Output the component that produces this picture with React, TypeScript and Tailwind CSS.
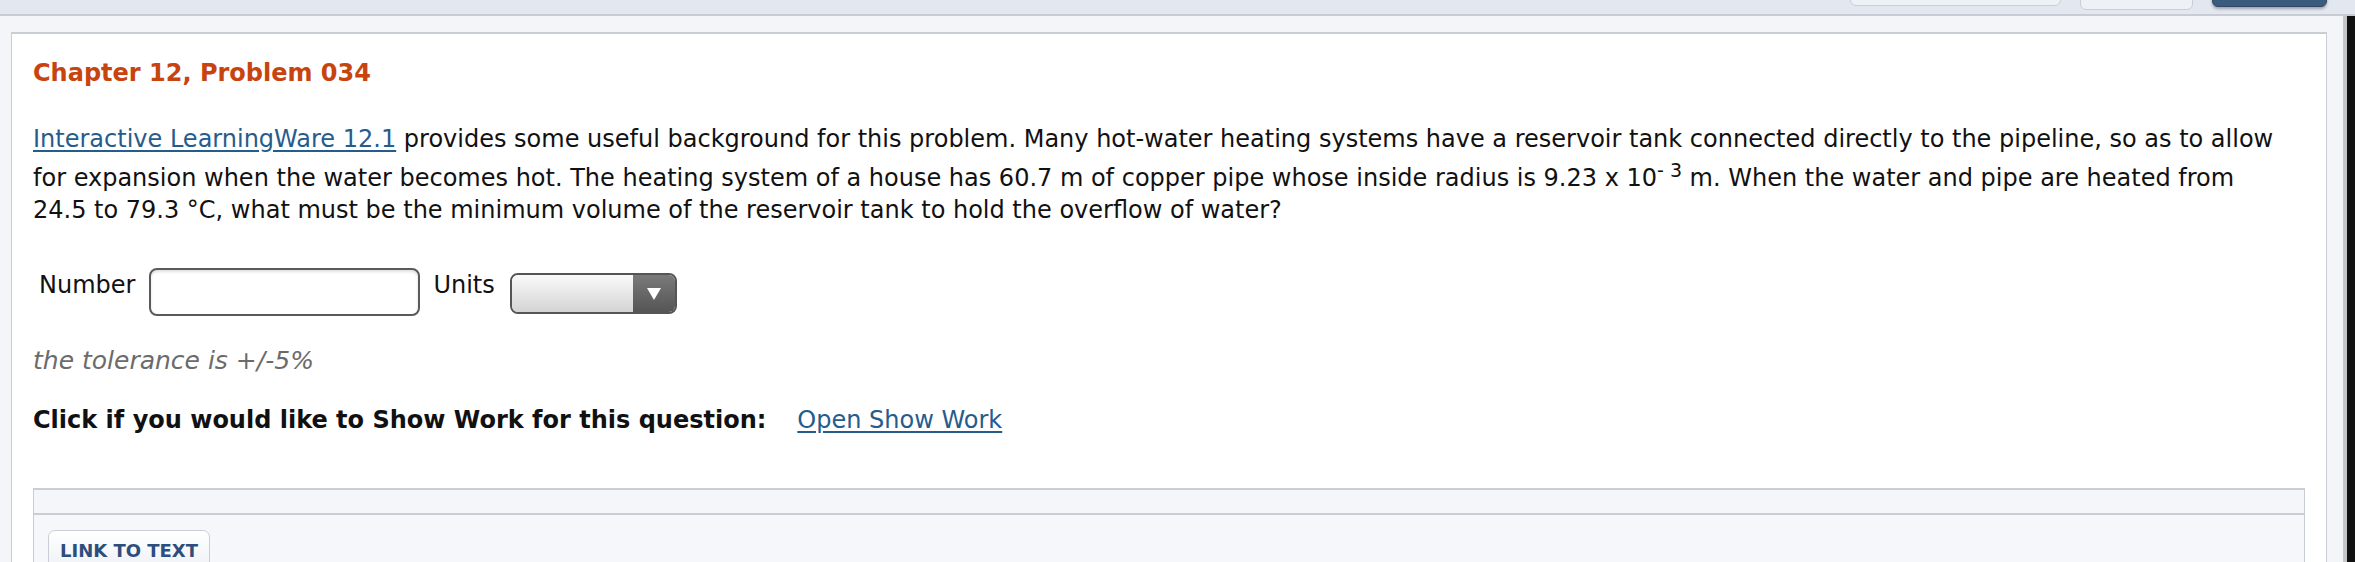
import type { ReactNode } from "react";

function TopButton({ className }: { className: string }) {
  return <div className={`h-[40px] rounded-[6px] border ${className}`} />;
}

function Label({ children }: { children: ReactNode }) {
  return <span className="mt-[2px] text-[24px] leading-[30px] text-[#111]">{children}</span>;
}

export default function App() {
  return (
    <div className="flex h-[562px] w-[2355px] flex-col overflow-hidden bg-[#f3f5f8] font-['DejaVu_Sans',sans-serif]">
      <div className="flex h-[16px] shrink-0 items-end justify-end gap-[19px] overflow-hidden border-b-2 border-[#c7ccd5] bg-[#e3e7ef] pr-[28px]">
        <div className="mb-[8px] w-[211px]">
          <TopButton className="border-[#c9ced6] bg-[#eef1f6]" />
        </div>
        <div className="mb-[4px] w-[113px]">
          <TopButton className="border-[#c9ced6] bg-[#eef1f6]" />
        </div>
        <div className="mb-[7px] w-[115px]">
          <TopButton className="border-[#2e4a6a] bg-[#3a5a7e] shadow-[0_2px_3px_rgba(0,0,0,0.3)]" />
        </div>
      </div>

      <div className="flex flex-1">
        <div className="ml-[11px] mt-[16px] flex w-[2316px] flex-col border border-t-2 border-[#c9ced6] bg-white pl-[21px] pr-[21px]">
          <h1 className="mt-[24px] text-[24px] font-bold leading-[30px] text-[#c7440f]">
            Chapter 12, Problem 034
          </h1>

          <p className="mt-[35px] text-[24px] leading-[32px] text-[#111]">
            <a href="#" className="text-[#265c8c] underline underline-offset-[3px]">
              Interactive LearningWare 12.1
            </a>{" "}
            provides some useful background for this problem. Many hot-water heating systems have a
            reservoir tank connected directly to the pipeline, so as to allow for expansion when the
            water becomes hot. The heating system of a house has 60.7 m of copper pipe whose inside
            radius is 9.23 x 10
            <sup className="static align-super text-[19px] leading-[30px]">- 3</sup> m. When the
            water and pipe are heated from
            <br />
            24.5 to 79.3 °C, what must be the minimum volume of the reservoir tank to hold the
            overflow of water?
          </p>

          <div className="mt-[42px] flex items-start">
            <span className="ml-[6px] flex">
              <Label>Number</Label>
            </span>
            <div className="ml-[14px] h-[48px] w-[271px] rounded-[8px] border-2 border-[#5a5a5a] bg-white shadow-[inset_0_2px_3px_rgba(0,0,0,0.12)]" />
            <span className="ml-[13px] flex">
              <Label>Units</Label>
            </span>
            <div className="ml-[15px] mt-[5px] flex h-[41px] w-[167px] overflow-hidden rounded-[8px] border-2 border-[#555]">
              <div className="flex-1 bg-gradient-to-b from-[#fafafa] to-[#d4d4d4]" />
              <div className="flex w-[42px] items-center justify-center bg-gradient-to-b from-[#7a7a7a] to-[#555]">
                <svg width="14" height="12" viewBox="0 0 14 12">
                  <path d="M0 0 L14 0 L7 12 Z" fill="#fff" />
                </svg>
              </div>
            </div>
          </div>

          <p className="mt-[29px] text-[25px] italic leading-[32px] text-[#6b6b6b]">
            the tolerance is +/-5%
          </p>

          <div className="mt-[27px] flex items-center gap-[31px] text-[24px] leading-[32px]">
            <span className="font-bold text-[#111]">
              Click if you would like to Show Work for this question:
            </span>
            <a href="#" className="text-[#265c8c] underline underline-offset-[3px]">
              Open Show Work
            </a>
          </div>

          <div className="mt-[52px] flex flex-1 flex-col border border-t-2 border-b-0 border-[#c9ced6] bg-[#f5f7fa]">
            <div className="h-[25px] border-b-2 border-[#c9ced6] bg-[#f4f6f9]" />
            <div className="px-[14px] pt-[15px]">
              <div className="inline-flex h-[40px] items-start rounded-t-[7px] border border-[#c9ced6] bg-gradient-to-b from-[#ffffff] to-[#eef1f6] px-[11px] pt-[8px] text-[18px] font-bold leading-[24px] text-[#2c4d7d]">
                LINK TO TEXT
              </div>
            </div>
          </div>
        </div>

        <div className="ml-[16px] w-[4px] bg-[#c6c6c6]" />
        <div className="w-[8px] bg-[#111]" />
      </div>
    </div>
  );
}
